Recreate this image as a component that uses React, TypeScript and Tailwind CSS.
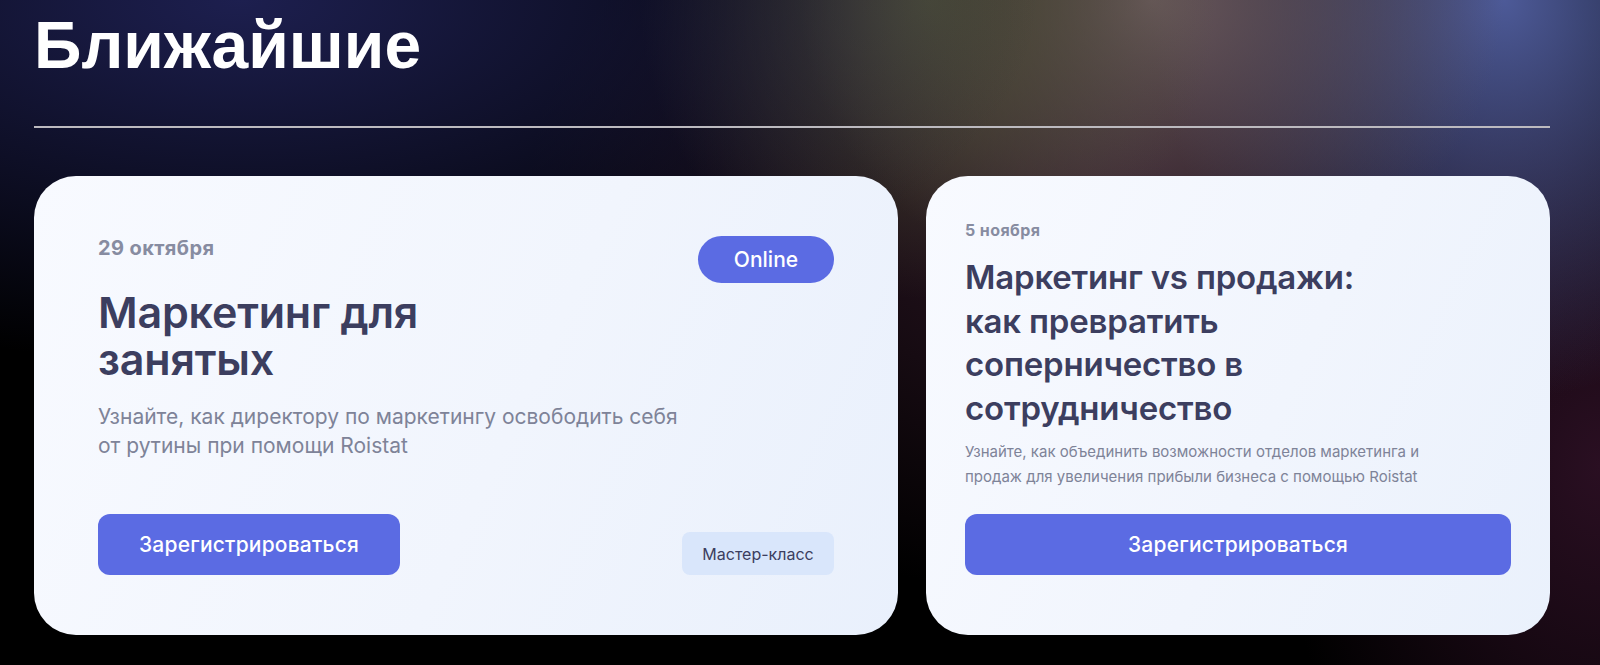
import React from 'react'

function EventDate({ children, size }: { children: React.ReactNode; size: 'lg' | 'sm' }) {
  return (
    <div
      className={
        size === 'lg'
          ? 'text-[20px] leading-6 font-bold text-[#878ca1] tracking-[0.4px]'
          : 'text-[16px] leading-5 font-bold text-[#878ca1] tracking-[0.4px]'
      }
    >
      {children}
    </div>
  )
}

function RegisterButton({ wide }: { wide?: boolean }) {
  return (
    <button
      className={
        (wide ? 'w-full ' : 'w-[302px] ') +
        'h-[61px] rounded-[12px] bg-[#5b6be3] text-white text-[21px] font-medium leading-none tracking-[0.2px]'
      }
    >
      Зарегистрироваться
    </button>
  )
}

export default function App() {
  return (
    <div className="relative h-[665px] w-full overflow-hidden bg-black font-['Inter',sans-serif]">
      {/* background glow */}
      <div className="absolute inset-0 bg-[radial-gradient(ellipse_50%_55%_at_15%_0%,#1d1f4f_0%,transparent_100%),radial-gradient(ellipse_18%_45%_at_58%_0%,#4c4c36_0%,transparent_100%),radial-gradient(ellipse_22%_45%_at_72%_0%,#6b5a5e_0%,transparent_100%),radial-gradient(ellipse_22%_60%_at_94%_0%,#4d5a98_0%,transparent_100%),radial-gradient(ellipse_35%_60%_at_68%_30%,#2c1624_0%,transparent_100%),radial-gradient(ellipse_20%_70%_at_100%_70%,#2a0f22_0%,transparent_100%)]" />

      <div className="relative flex flex-col pl-[34px] pr-[50px]">
        <h1 className="mt-[12px] h-[66px] text-[66px] leading-none font-bold text-white font-['Liberation_Sans',Arial,sans-serif]">
          Ближайшие
        </h1>

        <div className="mt-[48px] h-[2px] bg-[#bcbabf]" />

        <div className="mt-[48px] flex gap-[28px]">
          {/* card 1 */}
          <div className="w-[864px] h-[459px] shrink-0 rounded-[42px] bg-[linear-gradient(115deg,#f8faff_0%,#f1f5fd_55%,#e9f0fc_100%)] px-[64px] pt-[60px] pb-[60px] flex flex-col">
            <div className="flex items-start justify-between">
              <EventDate size="lg">29 октября</EventDate>
              <span className="h-[47px] w-[136px] rounded-full bg-[#5b6be3] text-white text-[21px] font-medium flex items-center justify-center">
                Online
              </span>
            </div>
            <h2 className="mt-[6px] text-[43px] leading-[47px] font-semibold text-[#3c3e5f] tracking-[-0.2px]">
              Маркетинг для
              <br />
              занятых
            </h2>
            <p className="mt-[19px] text-[21px] leading-[29px] text-[#7e8398]">
              Узнайте, как директору по маркетингу освободить себя
              <br />
              от рутины при помощи Roistat
            </p>
            <div className="mt-auto flex items-end justify-between">
              <RegisterButton />
              <span className="h-[43px] w-[152px] rounded-[8px] bg-[#d9e6fb] text-[16px] text-[#3c3e5f] flex items-center justify-center">
                Мастер-класс
              </span>
            </div>
          </div>

          {/* card 2 */}
          <div className="flex-1 h-[459px] rounded-[42px] bg-[linear-gradient(115deg,#f8faff_0%,#f1f5fd_55%,#eaf1fc_100%)] px-[39px] pt-[44px] pb-[60px] flex flex-col">
            <EventDate size="sm">5 ноября</EventDate>
            <h2 className="mt-[16px] text-[33px] leading-[43.5px] font-semibold text-[#3c3e5f] tracking-[-0.2px]">
              Маркетинг vs продажи:
              <br />
              как превратить
              <br />
              соперничество в
              <br />
              сотрудничество
            </h2>
            <p className="mt-[10px] text-[15px] leading-[24.5px] text-[#7e8398]">
              Узнайте, как объединить возможности отделов маркетинга и
              <br />
              продаж для увеличения прибыли бизнеса с помощью Roistat
            </p>
            <div className="mt-auto">
              <RegisterButton wide />
            </div>
          </div>
        </div>
      </div>
    </div>
  )
}
